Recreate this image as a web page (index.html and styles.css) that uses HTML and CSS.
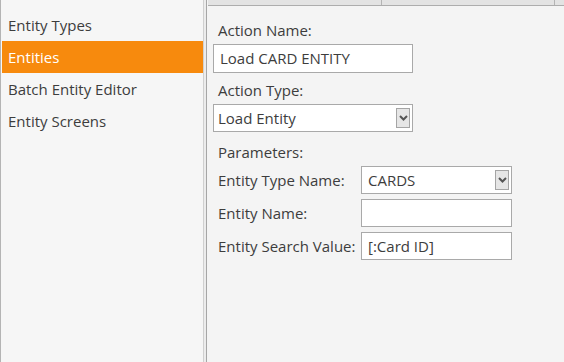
FILE: index.html
```html
<!DOCTYPE html>
<html>
<head>
<meta charset="utf-8">
<link rel="stylesheet" href="styles.css">
</head>
<body>
<div class="app">
  <div class="sidebar">
    <div class="item">Entity Types</div>
    <div class="item active">Entities</div>
    <div class="item">Batch Entity Editor</div>
    <div class="item">Entity Screens</div>
  </div>
  <div class="gap"></div>
  <div class="main">
    <div class="tabs">
      <div class="tab t1"></div>
      <div class="tab t2"></div>
      <div class="tab t3"></div>
    </div>
    <div class="form">
      <div class="label">Action Name:</div>
      <div class="field wide">Load CARD ENTITY</div>
      <div class="label">Action Type:</div>
      <div class="field wide select"><span class="val">Load Entity</span><span class="btn"><svg width="9" height="6" viewBox="0 0 9 6"><path d="M1 1 L4.5 4.5 L8 1" fill="none" stroke="#555" stroke-width="2"/></svg></span></div>
      <div class="label params">Parameters:</div>
      <div class="grid">
        <div class="glabel">Entity Type Name:</div>
        <div class="field select small"><span class="val">CARDS</span><span class="btn"><svg width="9" height="6" viewBox="0 0 9 6"><path d="M1 1 L4.5 4.5 L8 1" fill="none" stroke="#555" stroke-width="2"/></svg></span></div>
        <div class="glabel">Entity Name:</div>
        <div class="field small"></div>
        <div class="glabel">Entity Search Value:</div>
        <div class="field small">[:Card ID]</div>
      </div>
    </div>
  </div>
</div>
</body>
</html>
```

FILE: styles.css
```css
html, body {
  margin: 0;
  padding: 0;
}
body {
  width: 564px;
  height: 362px;
  overflow: hidden;
  font-family: "Open Sans", "Noto Sans", sans-serif;
  font-size: 15px;
  color: #3d3d3d;
  background: #f4f4f4;
}
.app {
  display: flex;
  height: 362px;
}
.sidebar {
  width: 204px;
  box-sizing: border-box;
  border-left: 1px solid #b4b4b4;
  border-right: 1px solid #d0d0d0;
  background: #f6f6f6;
  padding: 9px 0 0 1px;
}
.item {
  height: 32px;
  line-height: 33px;
  padding-left: 6px;
  white-space: nowrap;
}
.item.active {
  background: #f78a0d;
  color: #fff;
}
.gap {
  width: 2px;
  background: #ececec;
}
.main {
  flex: 1;
  border-left: 1px solid #a6a6a6;
  background: #f4f4f4;
  display: flex;
  flex-direction: column;
}
.tabs {
  display: flex;
  height: 5px;
  margin-left: 1px;
  border-bottom: 1px solid #adadad;
  background: #e3e3e3;
}
.tab {
  height: 5px;
}
.t1 { width: 173px; border-right: 1px solid #b4b4b4; }
.t2 { width: 172px; border-right: 1px solid #b4b4b4; }
.t3 { flex: 1; }
.form {
  padding: 14px 0 0 6px;
  display: flex;
  flex-direction: column;
  align-items: flex-start;
}
.label {
  padding-left: 5px;
  height: 24px;
  line-height: 20px;
}
.field {
  box-sizing: border-box;
  background: #fff;
  border: 1px solid #a9a9a9;
  height: 29px;
  line-height: 27px;
  white-space: nowrap;
}
.field.wide {
  width: 200px;
  padding-left: 6px;
  margin-bottom: 7px;
}
.select {
  display: flex;
  align-items: center;
  justify-content: space-between;
  padding-right: 2px;
}
.field.wide.select {
  height: 28px;
  padding-left: 4px;
  margin-bottom: 10px;
}
.btn {
  width: 14px;
  height: 20px;
  box-sizing: border-box;
  border: 1px solid #a5a5a5;
  background: #e6e6e6;
  display: flex;
  align-items: center;
  justify-content: center;
}
.params {
  height: 26px;
}
.grid {
  display: grid;
  grid-template-columns: 143px 151px;
  row-gap: 5px;
  padding-left: 5px;
  margin-top: -2px;
  align-items: center;
}
.glabel {
  white-space: nowrap;
}
.field.small {
  height: 28px;
  padding-left: 6px;
}
.field.small.select {
  padding-left: 6px;
}
```
